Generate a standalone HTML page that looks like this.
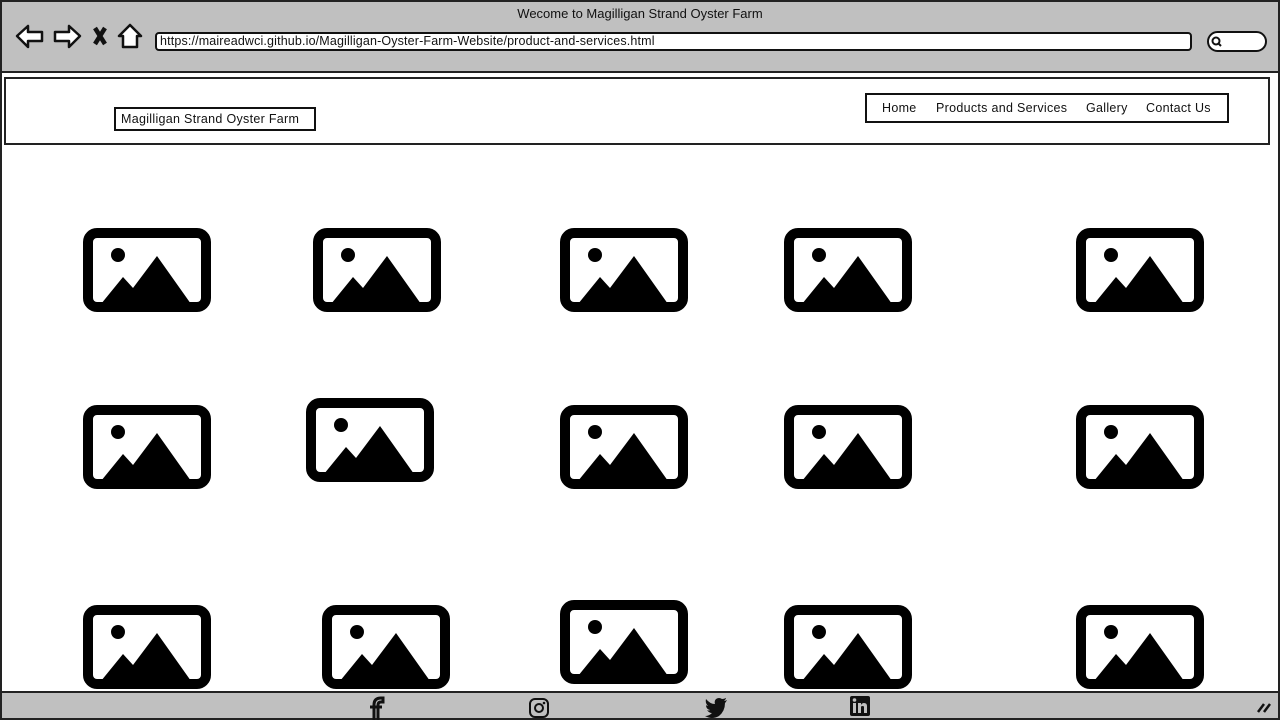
<!DOCTYPE html>
<html><head><meta charset="utf-8"><style>
*{margin:0;padding:0;box-sizing:border-box}
body{width:1280px;height:720px;background:#fff;position:relative;overflow:hidden;font-family:"Liberation Sans",sans-serif;color:#111}
.a{position:absolute}
.img{position:absolute;width:128px;height:84px}
.t{font-size:12.5px;white-space:nowrap;letter-spacing:0.3px}
</style></head><body>
<div class="a" style="left:0;top:0;width:1280px;height:720px;border:2px solid #222"></div>
<div class="a" style="left:2px;top:2px;width:1276px;height:71px;background:#c0c0c0;border-bottom:2px solid #222"></div>
<div class="a t" style="left:0;top:6px;width:1280px;text-align:center;font-size:13px;letter-spacing:0">Wecome to Magilligan Strand Oyster Farm</div>
<svg class="a" style="left:14px;top:22px" width="132" height="30" viewBox="0 0 132 30" fill="#fff" stroke="#111" stroke-width="2.5" stroke-linejoin="round">
<path d="M3 14 L14 4 L14 10 L28 10 L28 19 L14 19 L14 25 Z"/>
<path d="M66 14 L55 4 L55 10 L41 10 L41 19 L55 19 L55 25 Z"/>
<path d="M81 6 L91 22 M91 6 L81 22" stroke-width="4.5"/>
<path d="M116 3 L105 14 L109 14 L109 25 L123 25 L123 14 L127 14 Z"/>
</svg>
<div class="a" style="left:155px;top:32px;width:1037px;height:19px;background:#fff;border:2.5px solid #111;border-radius:4px"></div>
<div class="a t" style="left:160px;top:34px;font-size:12.5px;letter-spacing:0.15px">https://maireadwci.github.io/Magilligan-Oyster-Farm-Website/product-and-services.html</div>
<div class="a" style="left:1207px;top:31px;width:60px;height:21px;background:#fff;border:2.5px solid #111;border-radius:11px"></div>
<svg class="a" style="left:1211px;top:36px" width="12" height="12"><circle cx="5" cy="5" r="3.5" fill="none" stroke="#111" stroke-width="2"/><path d="M7 7 L10 10" stroke="#111" stroke-width="2"/></svg>
<div class="a" style="left:4px;top:77px;width:1266px;height:68px;border:2px solid #222"></div>
<div class="a" style="left:114px;top:107px;width:202px;height:24px;border:2px solid #111"></div>
<div class="a t" style="left:121px;top:112px">Magilligan Strand Oyster Farm</div>
<div class="a" style="left:865px;top:93px;width:364px;height:30px;border:2px solid #111"></div>
<div class="a t" style="left:882px;top:101px">Home</div>
<div class="a t" style="left:936px;top:101px">Products and Services</div>
<div class="a t" style="left:1086px;top:101px">Gallery</div>
<div class="a t" style="left:1146px;top:101px">Contact Us</div>

<svg class="img" style="left:83px;top:228px" viewBox="0 0 128 84"><rect x="5" y="5" width="118" height="74" rx="9" fill="none" stroke="#000" stroke-width="10"/><circle cx="35" cy="27" r="7"/><path d="M18 76 L40 49 L50 60 L74 28 L108 76Z"/></svg>
<svg class="img" style="left:313px;top:228px" viewBox="0 0 128 84"><rect x="5" y="5" width="118" height="74" rx="9" fill="none" stroke="#000" stroke-width="10"/><circle cx="35" cy="27" r="7"/><path d="M18 76 L40 49 L50 60 L74 28 L108 76Z"/></svg>
<svg class="img" style="left:560px;top:228px" viewBox="0 0 128 84"><rect x="5" y="5" width="118" height="74" rx="9" fill="none" stroke="#000" stroke-width="10"/><circle cx="35" cy="27" r="7"/><path d="M18 76 L40 49 L50 60 L74 28 L108 76Z"/></svg>
<svg class="img" style="left:784px;top:228px" viewBox="0 0 128 84"><rect x="5" y="5" width="118" height="74" rx="9" fill="none" stroke="#000" stroke-width="10"/><circle cx="35" cy="27" r="7"/><path d="M18 76 L40 49 L50 60 L74 28 L108 76Z"/></svg>
<svg class="img" style="left:1076px;top:228px" viewBox="0 0 128 84"><rect x="5" y="5" width="118" height="74" rx="9" fill="none" stroke="#000" stroke-width="10"/><circle cx="35" cy="27" r="7"/><path d="M18 76 L40 49 L50 60 L74 28 L108 76Z"/></svg>

<svg class="img" style="left:83px;top:405px" viewBox="0 0 128 84"><rect x="5" y="5" width="118" height="74" rx="9" fill="none" stroke="#000" stroke-width="10"/><circle cx="35" cy="27" r="7"/><path d="M18 76 L40 49 L50 60 L74 28 L108 76Z"/></svg>
<svg class="img" style="left:306px;top:398px" viewBox="0 0 128 84"><rect x="5" y="5" width="118" height="74" rx="9" fill="none" stroke="#000" stroke-width="10"/><circle cx="35" cy="27" r="7"/><path d="M18 76 L40 49 L50 60 L74 28 L108 76Z"/></svg>
<svg class="img" style="left:560px;top:405px" viewBox="0 0 128 84"><rect x="5" y="5" width="118" height="74" rx="9" fill="none" stroke="#000" stroke-width="10"/><circle cx="35" cy="27" r="7"/><path d="M18 76 L40 49 L50 60 L74 28 L108 76Z"/></svg>
<svg class="img" style="left:784px;top:405px" viewBox="0 0 128 84"><rect x="5" y="5" width="118" height="74" rx="9" fill="none" stroke="#000" stroke-width="10"/><circle cx="35" cy="27" r="7"/><path d="M18 76 L40 49 L50 60 L74 28 L108 76Z"/></svg>
<svg class="img" style="left:1076px;top:405px" viewBox="0 0 128 84"><rect x="5" y="5" width="118" height="74" rx="9" fill="none" stroke="#000" stroke-width="10"/><circle cx="35" cy="27" r="7"/><path d="M18 76 L40 49 L50 60 L74 28 L108 76Z"/></svg>

<svg class="img" style="left:83px;top:605px" viewBox="0 0 128 84"><rect x="5" y="5" width="118" height="74" rx="9" fill="none" stroke="#000" stroke-width="10"/><circle cx="35" cy="27" r="7"/><path d="M18 76 L40 49 L50 60 L74 28 L108 76Z"/></svg>
<svg class="img" style="left:322px;top:605px" viewBox="0 0 128 84"><rect x="5" y="5" width="118" height="74" rx="9" fill="none" stroke="#000" stroke-width="10"/><circle cx="35" cy="27" r="7"/><path d="M18 76 L40 49 L50 60 L74 28 L108 76Z"/></svg>
<svg class="img" style="left:560px;top:600px" viewBox="0 0 128 84"><rect x="5" y="5" width="118" height="74" rx="9" fill="none" stroke="#000" stroke-width="10"/><circle cx="35" cy="27" r="7"/><path d="M18 76 L40 49 L50 60 L74 28 L108 76Z"/></svg>
<svg class="img" style="left:784px;top:605px" viewBox="0 0 128 84"><rect x="5" y="5" width="118" height="74" rx="9" fill="none" stroke="#000" stroke-width="10"/><circle cx="35" cy="27" r="7"/><path d="M18 76 L40 49 L50 60 L74 28 L108 76Z"/></svg>
<svg class="img" style="left:1076px;top:605px" viewBox="0 0 128 84"><rect x="5" y="5" width="118" height="74" rx="9" fill="none" stroke="#000" stroke-width="10"/><circle cx="35" cy="27" r="7"/><path d="M18 76 L40 49 L50 60 L74 28 L108 76Z"/></svg>

<div class="a" style="left:2px;top:691px;width:1276px;height:27px;background:#c0c0c0;border-top:2px solid #222"></div>
<svg class="a" style="left:366px;top:695px" width="20" height="25"><path d="M8 25 V10 Q8 3 15 3 H17 V7 H15 Q12 7 12 10 V25 M4 12 H16" fill="none" stroke="#111" stroke-width="3"/></svg>
<svg class="a" style="left:528px;top:697px" width="22" height="22"><rect x="2" y="2" width="18" height="18" rx="5" fill="none" stroke="#111" stroke-width="2"/><circle cx="11" cy="11" r="4" fill="none" stroke="#111" stroke-width="2"/><circle cx="16" cy="6" r="1.3" fill="#111"/></svg>
<svg class="a" style="left:704px;top:697px" width="24" height="22" viewBox="0 0 24 22"><path d="M23 3 Q21 4 20 4 Q22 2 22 1 Q20 2 18 2 Q15 0 12 2 Q10 4 11 7 Q6 7 2 2 Q1 6 4 9 Q3 9 2 8 Q2 12 6 13 Q5 14 3 13 Q5 16 8 16 Q5 19 1 19 Q8 23 15 19 Q21 14 21 6 Q22 5 23 3Z" fill="#111"/></svg>
<svg class="a" style="left:849px;top:695px" width="22" height="22"><rect x="1" y="1" width="20" height="20" rx="2" fill="#111"/><rect x="4" y="8" width="3" height="10" fill="#c0c0c0"/><circle cx="5.5" cy="5" r="1.8" fill="#c0c0c0"/><path d="M9 8 H12 V10 Q13 8 15 8 Q18 8 18 11 V18 H15 V12 Q15 11 13.5 11 Q12 11 12 12 V18 H9Z" fill="#c0c0c0"/></svg>
<svg class="a" style="left:1256px;top:700px" width="16" height="14"><path d="M2 12 L8 4 M8 12 L14 4" stroke="#111" stroke-width="2.5"/></svg>
</body></html>
